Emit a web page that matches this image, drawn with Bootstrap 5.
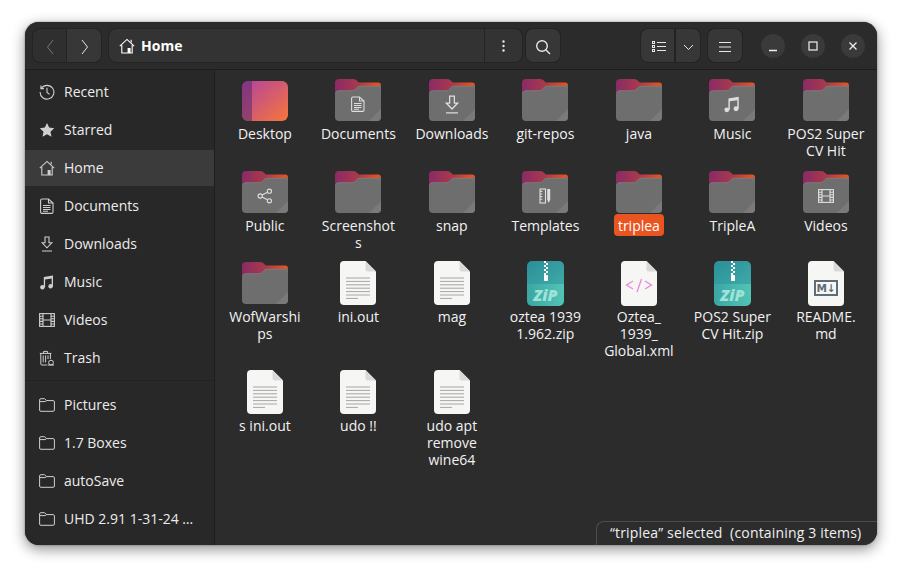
<!DOCTYPE html>
<html lang="en">
<head>
<meta charset="utf-8">
<title>Home</title>
<link href="https://cdn.jsdelivr.net/npm/bootstrap@5.3.0/dist/css/bootstrap.min.css" rel="stylesheet">
<style>
html,body{height:100%;}
body{background:#fff;padding:22px 25px 28px;overflow:hidden;font-family:"Open Sans","Noto Sans","Liberation Sans",sans-serif;font-size:14px;color:#f0f0f0;}
.fm-defs{position:absolute;width:0;height:0;}
.fm-window{width:852px;height:523px;background:#2c2c2c;border-radius:14px;box-shadow:0 4px 14px rgba(0,0,0,.45),0 0 2px rgba(0,0,0,.4);overflow:hidden;}
.fm-head{height:48px;padding:0 12px 0 8px;background:#2b2b2b;border-bottom:1px solid #1d1d1d;flex:none;}
.fm-tool{height:33px;background:#373737;border:0;border-radius:7px;color:#e6e6e6;padding:0;box-shadow:0 0 0 1px #232323;}
.fm-tool:hover,.fm-tool:active,.fm-tool:focus{background:#373737;color:#e6e6e6;}
.fm-w34{width:34px;}
.fm-back{width:35px;background:#2f2f2f;color:#777;border-radius:7px 0 0 7px;padding-right:2px;}
.fm-back:hover{background:#2f2f2f;color:#777;}
.fm-fwd{width:34px;border-radius:0 7px 7px 0;padding-left:2px;}
.fm-viewa{width:35px;border-radius:7px 0 0 7px;}
.fm-viewb{width:25px;border-radius:0 7px 7px 0;border-left:1px solid #222;}
.fm-path{width:413px;height:33px;background:#333;border-radius:7px;box-shadow:0 0 0 1px #232323;}
.fm-crumb{padding-left:10px;font-weight:700;color:#fff;}
.fm-crumb svg{margin-right:6px;}
.fm-pathmenu{width:38px;height:33px;border-left:1px solid #232323;}
.fm-circle{width:24px;height:24px;border-radius:50%;background:#3a3a3a;color:#eee;border:0;padding:0;}
.fm-group-gap{gap:16px;margin-left:19px;}
.fm-side{width:190px;background:#282828;border-right:1px solid #1d1d1d;padding-top:4px;flex:none;}
.fm-place{height:36px;margin-bottom:2px;padding-left:14px;color:#ececec;gap:9px;}
.fm-place span{padding-bottom:2px;}
.fm-place svg{color:#cfcfcf;flex:none;}
.fm-place.fm-on{background:#3b3b3b;}
.fm-sep{height:1px;background:#222;margin:4px 0 6px;}
.fm-main{flex:1;min-width:0;}
.fm-grid{display:grid;grid-template-columns:repeat(7,93.5px);row-gap:10.5px;padding:8px 0 0 3.15px;align-items:start;}
.fm-slot{height:44px;}
.fm-deskicon{margin-top:2px;}
.fm-name{margin-top:3px;line-height:17px;text-align:center;white-space:nowrap;color:#f2f2f2;}
.fm-pick{background:#e95420;color:#fff;border-radius:4px;padding:1.5px 4px;}
.fm-status{position:absolute;right:0;bottom:0;width:281px;height:24px;background:#2c2c2c;border:1px solid #4c4c4c;border-right:0;border-bottom:0;border-top-left-radius:8px;line-height:22px;padding-left:13px;white-space:pre;color:#f0f0f0;letter-spacing:.17px;}
.fm-ziptext{font-family:"Open Sans",sans-serif;font-weight:800;font-style:italic;font-size:16px;fill:#9fe2d8;}
.fm-mdtext{font-family:"DejaVu Sans",sans-serif;font-weight:700;font-size:10.5px;fill:#5d6c78;}
</style>
</head>
<body>
<svg class="fm-defs" aria-hidden="true">
<defs>
<linearGradient id="g-tab" x1="0" y1="0" x2="1" y2="0"><stop offset="0" stop-color="#8a2a66"/><stop offset=".5" stop-color="#a83a4c"/><stop offset="1" stop-color="#e9561f"/></linearGradient>
<linearGradient id="g-desk" x1="0" y1="0" x2="1" y2="1"><stop offset="0" stop-color="#b2429f"/><stop offset="1" stop-color="#f7763a"/></linearGradient>
<linearGradient id="g-zip" x1="0" y1="0" x2="1" y2="1"><stop offset="0" stop-color="#2a8f98"/><stop offset="1" stop-color="#40aaa8"/></linearGradient>
<linearGradient id="g-zip2" x1="0" y1="0" x2="1" y2="0"><stop offset="0" stop-color="#3ba6a3"/><stop offset="1" stop-color="#52c4b6"/></linearGradient>
</defs>
<symbol id="i-recent" viewBox="0 0 16 16"><g fill="none" stroke="currentColor" stroke-width="1.1"><path d="M2.4 4.2A6.9 6.9 0 1 1 1.1 8"/><path d="M1.9 1.6v3h3"/><path d="M8 3.8v4.6l2.6 2"/></g></symbol>
<symbol id="i-star" viewBox="0 0 16 16"><polygon fill="currentColor" points="8,1 10.2,5.6 15.2,6.2 11.5,9.7 12.5,14.8 8,12.3 3.5,14.8 4.5,9.7 .8,6.2 5.8,5.6"/></symbol>
<symbol id="i-home" viewBox="0 0 16 16"><g fill="none" stroke="currentColor" stroke-width="1.1"><path d="M.8 8.2 8 1.4l7.2 6.8"/><path d="M2.8 7v8h10.4V7"/><path d="M12.2 1.8v2.8"/></g><rect x="8.6" y="10" width="3" height="5" fill="currentColor"/></symbol>
<symbol id="i-doc" viewBox="0 0 16 16"><g fill="none" stroke="currentColor" stroke-width="1.1"><path d="M3 1h6.5L14 5v9a1.4 1.4 0 0 1-1.4 1.4H3A1.4 1.4 0 0 1 1.6 14V2.4A1.4 1.4 0 0 1 3 1z"/><path d="M9.5 1v4H14"/><path d="M4 7.5h7.5M4 9.5h7.5M4 11.5h7.5M4 13.3h5"/></g></symbol>
<symbol id="i-down" viewBox="0 0 16 16"><g fill="none" stroke="currentColor" stroke-width="1.1"><path d="M6 1h4v5.8h2.8L8 11.8 3.200 6.800H6z"/><path d="M3 15h10"/></g></symbol>
<symbol id="i-music" viewBox="0 0 16 16"><g fill="currentColor"><circle cx="3.4" cy="13.200" r="2.200"/><circle cx="11.600" cy="12.200" r="2.200"/><path d="M4.800 3 14 1.600v10.600h-1.300V4.600L6.100 5.600v7.600H4.800z"/></g></symbol>
<symbol id="i-film" viewBox="0 0 16 16"><g fill="none" stroke="currentColor" stroke-width="1.1"><rect x=".6" y="1.600" width="14.800" height="12.800"/><path d="M4 1.600v12.800M12 1.600v12.800M4 8h8M.6 4.200H4M.6 6.800H4M.6 9.400H4M.6 12H4M12 4.200h3.400M12 6.800h3.400M12 9.400h3.400M12 12h3.400"/></g></symbol>
<symbol id="i-trash" viewBox="0 0 16 16"><g fill="none" stroke="currentColor" stroke-width="1"><path d="M.8 3.400h11.600M4.600 3.400V1.400h4v2"/><path d="M1.800 3.400V14a1 1 0 0 0 1 1h5"/><path d="M11.400 3.400V9"/><path d="M4.200 5.400v7M6.600 5.400v7M9 5.400v3.600"/><circle cx="12" cy="12.600" r="2.400"/><path d="M8.600 15h6.400"/></g></symbol>
<symbol id="i-folder" viewBox="0 0 16 14"><g fill="none" stroke="currentColor" stroke-width="1"><path d="M.6 12V2a1.300 1.300 0 0 1 1.300-1.300h3.500a1 1 0 0 1 .8.400L7.600 2.600h6.500A1.300 1.300 0 0 1 15.400 3.900V12a1.300 1.300 0 0 1-1.300 1.300H1.900A1.300 1.300 0 0 1 .6 12z"/><path d="M.6 3.600h5.400l1.600-1"/></g></symbol>
<symbol id="i-share" viewBox="0 0 16 16"><g fill="none" stroke="currentColor" stroke-width="1.100"><circle cx="3.200" cy="8" r="2.100"/><circle cx="12.400" cy="3.200" r="2.100"/><circle cx="12.400" cy="12.800" r="2.100"/><path d="M5.100 7 10.500 4.200M5.100 9l5.400 2.800"/></g></symbol>
<symbol id="i-tmpl" viewBox="0 0 16 16"><g fill="none" stroke="currentColor" stroke-width="1.100"><rect x="3" y="1" width="5.500" height="14"/><path d="M3 3.400h2.300M3 6h2.300M3 8.600h2.300M3 11.200h2.300"/></g><path fill="currentColor" d="M10.200 1h3v10.400l-1.500 3.600-1.500-3.600z"/></symbol>
<symbol id="i-sr" viewBox="0 0 16 16"><g fill="none" stroke="currentColor" stroke-width="1.400"><circle cx="7" cy="7" r="5.300"/><path d="m11 11 4 4"/></g></symbol>
<symbol id="i-fold" viewBox="0 0 46 42">
<path fill="url(#g-tab)" d="M4 0h14c2 0 3 .7 4.300 2l1.400 1.400H43a3 3 0 0 1 3 3V20H0V4a4 4 0 0 1 4-4z"/>
<path fill="#6e6e6e" d="M4 11.400h13c1.500 0 2.800-.6 3.800-1.700l1.200-1.300c.8-.9 1.800-1.400 3-1.400h18a2 2 0 0 1 3 3V38a4 4 0 0 1-4 4H4a4 4 0 0 1-4-4V15.400a4 4 0 0 1 4-4z"/>
<path fill="#7a7a7a" d="M46 30v8a4 4 0 0 1-4 4h-8z"/>
<path fill="none" stroke="#858585" stroke-width=".6" d="M.4 14a3.500 3.500 0 0 1 3.600-2.300h13c1.500 0 2.800-.6 3.800-1.700l1.200-1.300c.8-.9 1.800-1.400 3-1.400h17a3 3 0 0 1 3.600 2.500"/>
</symbol>
<symbol id="i-desk" viewBox="0 0 46 40">
<rect width="46" height="40" rx="6" fill="url(#g-desk)"/>
<path d="M6 0h4v40H6a6 6 0 0 1-6-6V6a6 6 0 0 1 6-6z" fill="#5a2a70" opacity=".55"/>
</symbol>
<symbol id="i-file" viewBox="0 0 36 44">
<path fill="#f6f6f5" d="M4 0h21.500L36 10.500V40a4 4 0 0 1-4 4H4a4 4 0 0 1-4-4V4a4 4 0 0 1 4-4z"/>
<path fill="#d9d9d8" d="M25.500 0 36 10.500h-8a2.500 2.500 0 0 1-2.500-2.500z"/>
<path fill="none" stroke="#a6a6a6" stroke-width="1" d="M6 17h24M6 20.400h24M6 23.800h24M6 27.200h24M6 30.600h24M6 34h24M6 37.400h12"/>
</symbol>
<symbol id="i-zip" viewBox="0 0 37 45">
<path fill="url(#g-zip)" d="M5 0h27a5 5 0 0 1 5 5v20H0V5a5 5 0 0 1 5-5z"/>
<path fill="url(#g-zip2)" d="M0 23h37v17a5 5 0 0 1-5 5H5a5 5 0 0 1-5-5z"/>
<g fill="#fff"><rect x="17" y="0" width="2" height="2"/><rect x="19" y="2" width="2" height="2"/><rect x="17" y="4" width="2" height="2"/><rect x="19" y="6" width="2" height="2"/><rect x="17" y="8" width="2" height="2"/><rect x="19" y="10" width="2" height="2"/><rect x="17" y="12" width="2" height="2"/><rect x="17" y="14" width="4" height="6" rx=".8"/></g>
</symbol>
<symbol id="i-xml" viewBox="0 0 36 45">
<path fill="#f6f6f5" d="M4 0h21.500L36 10.500V41a4 4 0 0 1-4 4H4a4 4 0 0 1-4-4V4a4 4 0 0 1 4-4z"/>
<path fill="#d9d9d8" d="M25.500 0 36 10.500h-8a2.500 2.500 0 0 1-2.500-2.500z"/>
<path fill="none" stroke="#e68ad8" stroke-width="1.300" d="M12 20l-6.500 4 6.500 4M24 20l6.500 4-6.500 4M20.500 18l-4.500 13"/>
</symbol>
<symbol id="i-md" viewBox="0 0 36 45">
<path fill="#f6f6f5" d="M4 0h21.500L36 10.500V41a4 4 0 0 1-4 4H4a4 4 0 0 1-4-4V4a4 4 0 0 1 4-4z"/>
<path fill="#d9d9d8" d="M25.500 0 36 10.500h-8a2.500 2.500 0 0 1-2.500-2.500z"/>
<rect x="7" y="20" width="22" height="14" fill="none" stroke="#5d6c78" stroke-width="2"/>
</symbol>
</svg>

<div class="fm-window d-flex flex-column">
  <header class="fm-head d-flex align-items-center">
    <div class="btn-group">
      <button class="btn fm-tool fm-back" aria-label="Back"><svg width="8" height="16" viewBox="0 0 8 16"><path d="M7 1 1.500 8 7 15" fill="none" stroke="currentColor"/></svg></button>
      <button class="btn fm-tool fm-fwd" aria-label="Forward"><svg width="8" height="16" viewBox="0 0 8 16"><path d="M1 1l5.500 7L1 15" fill="none" stroke="currentColor"/></svg></button>
    </div>
    <div class="fm-path d-flex align-items-center justify-content-between ms-2">
      <div class="fm-crumb d-flex align-items-center"><svg width="16" height="16"><use href="#i-home"/></svg>Home</div>
      <div class="fm-pathmenu d-flex align-items-center justify-content-center"><svg width="3" height="12" viewBox="0 0 3 12"><g fill="#e6e6e6"><circle cx="1.500" cy="1.500" r="1.200"/><circle cx="1.500" cy="6" r="1.200"/><circle cx="1.500" cy="10.500" r="1.200"/></g></svg></div>
    </div>
    <button class="btn fm-tool fm-w34 ms-1" aria-label="Search"><svg width="16" height="16"><use href="#i-sr"/></svg></button>
    <div class="btn-group ms-auto">
      <button class="btn fm-tool fm-viewa" aria-label="List view"><svg width="14" height="12" viewBox="0 0 14 12"><g fill="none" stroke="currentColor"><rect x=".5" y=".5" width="2" height="2"/><rect x=".5" y="4.500" width="2" height="2"/><rect x=".5" y="8.500" width="2" height="2"/><path d="M5 1.500h9M5 5.500h9M5 9.500h9"/></g></svg></button>
      <button class="btn fm-tool fm-viewb" aria-label="View options"><svg width="11" height="7" viewBox="0 0 11 7"><path d="M1 1l4.500 4.500L10 1" fill="none" stroke="currentColor"/></svg></button>
    </div>
    <button class="btn fm-tool fm-w34 ms-2" aria-label="Menu"><svg width="14" height="12" viewBox="0 0 14 12"><path d="M1 1.500h12M1 6h12M1 10.500h12" fill="none" stroke="currentColor"/></svg></button>
    <div class="d-flex fm-group-gap">
      <button class="fm-circle d-flex align-items-center justify-content-center" aria-label="Minimize"><svg width="12" height="12" viewBox="0 0 12 12"><path d="M2 10.500h8" stroke="currentColor" stroke-width="1.300"/></svg></button>
      <button class="fm-circle d-flex align-items-center justify-content-center" aria-label="Maximize"><svg width="12" height="12" viewBox="0 0 12 12"><rect x="2" y="2" width="8" height="8" fill="none" stroke="currentColor" stroke-width="1.200"/></svg></button>
      <button class="fm-circle d-flex align-items-center justify-content-center" aria-label="Close"><svg width="12" height="12" viewBox="0 0 12 12"><path d="M2.500 2.500l7 7M9.500 2.500l-7 7" stroke="currentColor" stroke-width="1.300"/></svg></button>
    </div>
  </header>
  <div class="d-flex flex-grow-1 overflow-hidden">
    <nav class="fm-side">
      <div class="fm-place d-flex align-items-center"><svg width="16" height="16"><use href="#i-recent"/></svg><span>Recent</span></div>
      <div class="fm-place d-flex align-items-center"><svg width="16" height="16"><use href="#i-star"/></svg><span>Starred</span></div>
      <div class="fm-place fm-on d-flex align-items-center"><svg width="16" height="16"><use href="#i-home"/></svg><span>Home</span></div>
      <div class="fm-place d-flex align-items-center"><svg width="16" height="16"><use href="#i-doc"/></svg><span>Documents</span></div>
      <div class="fm-place d-flex align-items-center"><svg width="16" height="16"><use href="#i-down"/></svg><span>Downloads</span></div>
      <div class="fm-place d-flex align-items-center"><svg width="16" height="16"><use href="#i-music"/></svg><span>Music</span></div>
      <div class="fm-place d-flex align-items-center"><svg width="16" height="16"><use href="#i-film"/></svg><span>Videos</span></div>
      <div class="fm-place d-flex align-items-center"><svg width="16" height="16"><use href="#i-trash"/></svg><span>Trash</span></div>
      <div class="fm-sep"></div>
      <div class="fm-place d-flex align-items-center"><svg width="16" height="14"><use href="#i-folder"/></svg><span>Pictures</span></div>
      <div class="fm-place d-flex align-items-center"><svg width="16" height="14"><use href="#i-folder"/></svg><span>1.7 Boxes</span></div>
      <div class="fm-place d-flex align-items-center"><svg width="16" height="14"><use href="#i-folder"/></svg><span>autoSave</span></div>
      <div class="fm-place d-flex align-items-center"><svg width="16" height="14"><use href="#i-folder"/></svg><span>UHD 2.91 1-31-24 …</span></div>
    </nav>
    <main class="fm-main position-relative">
      <div class="fm-grid">
        <div><div class="fm-slot d-flex align-items-center justify-content-center"><svg width="46" height="40" class="fm-deskicon"><use href="#i-desk"/></svg></div><div class="fm-name">Desktop</div></div>
        <div><div class="fm-slot d-flex align-items-center justify-content-center"><svg width="46" height="42"><use href="#i-fold"/><use href="#i-doc" x="15" y="17" width="16" height="16" color="#dedede"/></svg></div><div class="fm-name">Documents</div></div>
        <div><div class="fm-slot d-flex align-items-center justify-content-center"><svg width="46" height="42"><use href="#i-fold"/><use href="#i-down" x="13.500" y="16" width="19" height="19" color="#dedede"/></svg></div><div class="fm-name">Downloads</div></div>
        <div><div class="fm-slot d-flex align-items-center justify-content-center"><svg width="46" height="42"><use href="#i-fold"/></svg></div><div class="fm-name">git-repos</div></div>
        <div><div class="fm-slot d-flex align-items-center justify-content-center"><svg width="46" height="42"><use href="#i-fold"/></svg></div><div class="fm-name">java</div></div>
        <div><div class="fm-slot d-flex align-items-center justify-content-center"><svg width="46" height="42"><use href="#i-fold"/><use href="#i-music" x="14" y="16" width="18" height="18" color="#dedede"/></svg></div><div class="fm-name">Music</div></div>
        <div><div class="fm-slot d-flex align-items-center justify-content-center"><svg width="46" height="42"><use href="#i-fold"/></svg></div><div class="fm-name">POS2 Super<br>CV Hit</div></div>

        <div><div class="fm-slot d-flex align-items-center justify-content-center"><svg width="46" height="42"><use href="#i-fold"/><use href="#i-share" x="15" y="17" width="16" height="16" color="#dedede"/></svg></div><div class="fm-name">Public</div></div>
        <div><div class="fm-slot d-flex align-items-center justify-content-center"><svg width="46" height="42"><use href="#i-fold"/></svg></div><div class="fm-name">Screenshot<br>s</div></div>
        <div><div class="fm-slot d-flex align-items-center justify-content-center"><svg width="46" height="42"><use href="#i-fold"/></svg></div><div class="fm-name">snap</div></div>
        <div><div class="fm-slot d-flex align-items-center justify-content-center"><svg width="46" height="42"><use href="#i-fold"/><use href="#i-tmpl" x="15" y="17" width="16" height="16" color="#dedede"/></svg></div><div class="fm-name">Templates</div></div>
        <div><div class="fm-slot d-flex align-items-center justify-content-center"><svg width="46" height="42"><use href="#i-fold"/></svg></div><div class="fm-name"><span class="fm-pick">triplea</span></div></div>
        <div><div class="fm-slot d-flex align-items-center justify-content-center"><svg width="46" height="42"><use href="#i-fold"/></svg></div><div class="fm-name">TripleA</div></div>
        <div><div class="fm-slot d-flex align-items-center justify-content-center"><svg width="46" height="42"><use href="#i-fold"/><use href="#i-film" x="15" y="17" width="16" height="16" color="#dedede"/></svg></div><div class="fm-name">Videos</div></div>

        <div><div class="fm-slot d-flex align-items-center justify-content-center"><svg width="46" height="42"><use href="#i-fold"/></svg></div><div class="fm-name">WofWarshi<br>ps</div></div>
        <div><div class="fm-slot d-flex align-items-center justify-content-center"><svg width="36" height="44"><use href="#i-file"/></svg></div><div class="fm-name">ini.out</div></div>
        <div><div class="fm-slot d-flex align-items-center justify-content-center"><svg width="36" height="44"><use href="#i-file"/></svg></div><div class="fm-name">mag</div></div>
        <div><div class="fm-slot d-flex align-items-center justify-content-center"><svg width="37" height="45"><use href="#i-zip"/><text class="fm-ziptext" x="18.500" y="39.500" text-anchor="middle">ZiP</text></svg></div><div class="fm-name">oztea 1939<br>1.962.zip</div></div>
        <div><div class="fm-slot d-flex align-items-center justify-content-center"><svg width="36" height="45"><use href="#i-xml"/></svg></div><div class="fm-name">Oztea_<br>1939_<br>Global.xml</div></div>
        <div><div class="fm-slot d-flex align-items-center justify-content-center"><svg width="37" height="45"><use href="#i-zip"/><text class="fm-ziptext" x="18.500" y="39.500" text-anchor="middle">ZiP</text></svg></div><div class="fm-name">POS2 Super<br>CV Hit.zip</div></div>
        <div><div class="fm-slot d-flex align-items-center justify-content-center"><svg width="36" height="45"><use href="#i-md"/><text class="fm-mdtext" x="18" y="31" text-anchor="middle">M↓</text></svg></div><div class="fm-name">README.<br>md</div></div>

        <div><div class="fm-slot d-flex align-items-center justify-content-center"><svg width="36" height="44"><use href="#i-file"/></svg></div><div class="fm-name">s ini.out</div></div>
        <div><div class="fm-slot d-flex align-items-center justify-content-center"><svg width="36" height="44"><use href="#i-file"/></svg></div><div class="fm-name">udo !!</div></div>
        <div><div class="fm-slot d-flex align-items-center justify-content-center"><svg width="36" height="44"><use href="#i-file"/></svg></div><div class="fm-name">udo apt<br>remove<br>wine64</div></div>
      </div>
      <div class="fm-status">“triplea” selected  (containing 3 items)</div>
    </main>
  </div>
</div>
<script src="https://cdn.jsdelivr.net/npm/bootstrap@5.3.0/dist/js/bootstrap.bundle.min.js"></script>
</body>
</html>
